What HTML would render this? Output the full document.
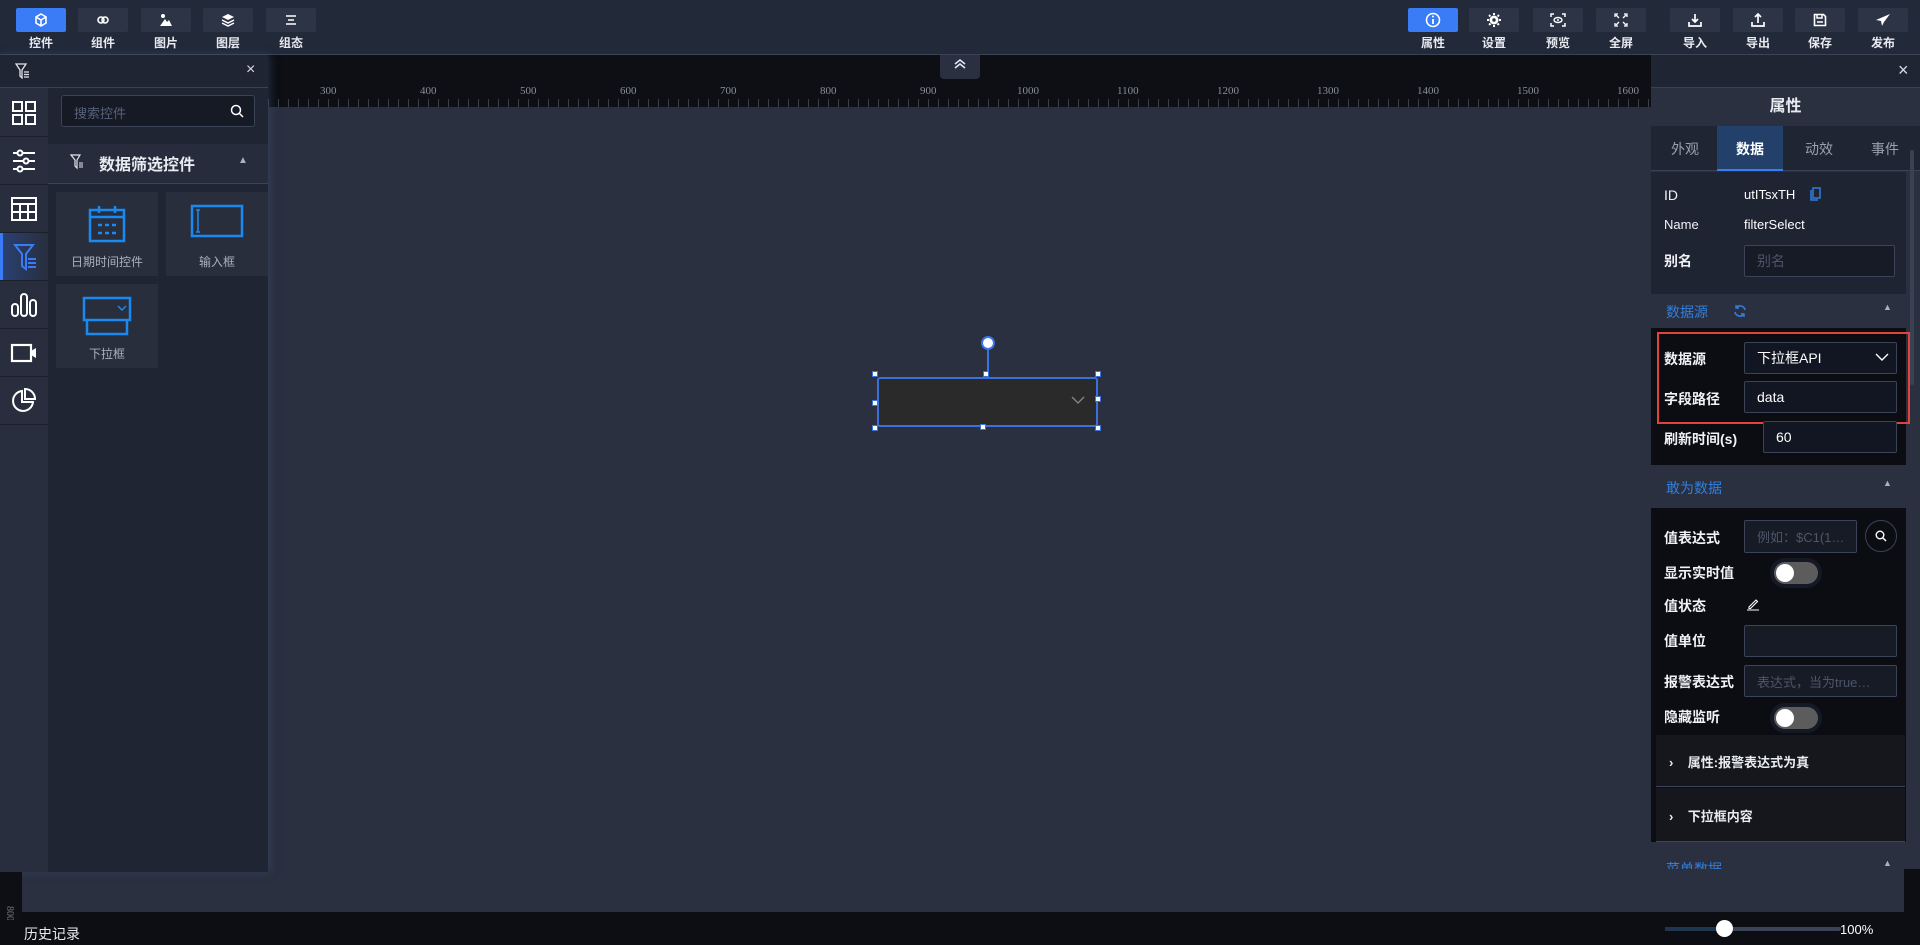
<!DOCTYPE html>
<html><head><meta charset="utf-8"><style>
*{margin:0;padding:0;box-sizing:border-box}
body{width:1920px;height:945px;overflow:hidden;background:#0c0e13;font-family:"Liberation Sans","Noto Sans CJK SC",sans-serif;color:#e6e8ee;position:relative}
.abs{position:absolute}
.top{left:0;top:0;width:1920px;height:55px;background:#222939;border-bottom:1px solid #3a4357}
.tb{position:absolute;top:8px;width:50px;height:24px;background:#2c3446;border-radius:2px;display:flex;align-items:center;justify-content:center}
.tb.on{background:#3a7bf6}
.tl{position:absolute;top:34px;width:50px;text-align:center;font-size:12px;color:#e8eaf0;font-weight:bold}
.canvas{left:22px;top:55px;width:1882px;height:857px;background:#2a3040}
.ruler{left:268px;top:55px;width:1383px;height:52px;background:#0d0f15}
.rl{position:absolute;top:30px;font-family:"Liberation Serif",serif;font-size:11px;color:#8a8f99}
.lp{left:0;top:55px;width:268px;height:817px;background:#202534;box-shadow:2px 0 8px rgba(60,80,110,.5)}
.ic{position:absolute;left:0;width:48px;height:47px;background:#282e3d;display:flex;align-items:center;justify-content:center}
.card{position:absolute;width:102px;height:84px;background:#282e3c;text-align:center;font-size:12px;color:#aab0bc}
.rp{left:1651px;top:55px;width:269px;height:814px;background:#2a3040;overflow:hidden}
.lab{position:absolute;left:13px;font-size:14px;color:#f0f2f6;font-weight:bold}
.inp{position:absolute;background:#171b26;border:1px solid #3a4358;border-radius:2px;font-size:14px;padding-left:12px;display:flex;align-items:center}
.sech{position:absolute;left:0;width:255px;font-size:14px;color:#2f7fe0}
.tog{position:absolute;width:44px;height:22px;border-radius:11px;background:#5c5c5c;box-shadow:0 0 0 4px #141925}
.tog:after{content:"";position:absolute;left:2px;top:2px;width:18px;height:18px;border-radius:9px;background:#fff}
.h{position:absolute;width:6px;height:6px;background:#fff;border:1.5px solid #3a74e0}
</style></head><body>
<div class="abs canvas"></div>
<div class="abs ruler">
<div class="abs" style="left:0;right:0;bottom:0;height:8px;background:repeating-linear-gradient(90deg,#3a3f4a 0 1px,transparent 1px 10px)"></div>
<div class="rl" style="left:52px">300</div><div class="rl" style="left:152px">400</div><div class="rl" style="left:252px">500</div><div class="rl" style="left:352px">600</div><div class="rl" style="left:452px">700</div><div class="rl" style="left:552px">800</div><div class="rl" style="left:652px">900</div><div class="rl" style="left:749px">1000</div><div class="rl" style="left:849px">1100</div><div class="rl" style="left:949px">1200</div><div class="rl" style="left:1049px">1300</div><div class="rl" style="left:1149px">1400</div><div class="rl" style="left:1249px">1500</div><div class="rl" style="left:1349px">1600</div>
</div>
<div class="abs" style="left:940px;top:55px;width:40px;height:24px;background:#2a3040;border-radius:0 0 4px 4px;color:#dfe6f5;text-align:center;font-size:12px;line-height:22px"><svg width="14" height="12" viewBox="0 0 14 12"><path d="M2 6l5-4 5 4M2 10l5-4 5 4" stroke="#dfe6f5" stroke-width="1.6" fill="none"/></svg></div>

<div class="abs top">
<div class="tb on" style="left:16px"><svg width="14" height="14" viewBox="0 0 14 14"><path d="M7 1l5 3v6l-5 3-5-3V4zM2 4l5 3 5-3M7 7v6" stroke="#fff" stroke-width="1.6" fill="none"/></svg></div><div class="tl" style="left:16px">控件</div>
<div class="tb" style="left:78px"><svg width="14" height="10" viewBox="0 0 14 10"><circle cx="5" cy="5" r="3" stroke="#fff" stroke-width="1.6" fill="none"/><circle cx="9" cy="5" r="3" stroke="#fff" stroke-width="1.6" fill="none"/></svg></div><div class="tl" style="left:78px">组件</div>
<div class="tb" style="left:141px"><svg width="14" height="14" viewBox="0 0 14 14"><circle cx="4" cy="3" r="2" fill="#fff"/><path d="M1 13l5-7 2 3 2-2 3 6z" fill="#fff"/></svg></div><div class="tl" style="left:141px">图片</div>
<div class="tb" style="left:203px"><svg width="14" height="14" viewBox="0 0 14 14"><path d="M7 1l6 3-6 3-6-3z" fill="#fff"/><path d="M1 7l6 3 6-3M1 10l6 3 6-3" stroke="#fff" stroke-width="1.5" fill="none"/></svg></div><div class="tl" style="left:203px">图层</div>
<div class="tb" style="left:266px"><svg width="12" height="10" viewBox="0 0 12 10"><path d="M1 1h10M3 5h6M1 9h10" stroke="#fff" stroke-width="1.6"/></svg></div><div class="tl" style="left:266px">组态</div>

<div class="tb on" style="left:1408px"><svg width="16" height="16" viewBox="0 0 16 16"><circle cx="8" cy="8" r="6.5" stroke="#fff" stroke-width="1.6" fill="none"/><path d="M8 7v5" stroke="#fff" stroke-width="1.8"/><circle cx="8" cy="4.5" r="1" fill="#fff"/></svg></div><div class="tl" style="left:1408px">属性</div>
<div class="tb" style="left:1469px"><svg width="14" height="14" viewBox="0 0 14 14"><circle cx="7" cy="7" r="4.5" fill="#fff"/><circle cx="7" cy="7" r="1.7" fill="#2c3446"/><path d="M7 0v14M0 7h14M2 2l10 10M12 2L2 12" stroke="#fff" stroke-width="2" stroke-dasharray="2 10"/></svg></div><div class="tl" style="left:1469px">设置</div>
<div class="tb" style="left:1533px"><svg width="16" height="14" viewBox="0 0 16 14"><path d="M1 4V1h3M12 1h3v3M15 10v3h-3M4 13H1v-3" stroke="#fff" stroke-width="1.5" fill="none"/><ellipse cx="8" cy="7" rx="4" ry="2.5" stroke="#fff" stroke-width="1.4" fill="none"/><circle cx="8" cy="7" r="1" fill="#fff"/></svg></div><div class="tl" style="left:1533px">预览</div>
<div class="tb" style="left:1596px"><svg width="14" height="14" viewBox="0 0 14 14"><path d="M1 4V1h3M10 1h3v3M13 10v3h-3M4 13H1v-3M2 2l3 3M12 2L9 5M12 12L9 9M2 12l3-3" stroke="#fff" stroke-width="1.3" fill="none"/></svg></div><div class="tl" style="left:1596px">全屏</div>
<div class="tb" style="left:1670px"><svg width="14" height="14" viewBox="0 0 14 14"><path d="M7 1v8M4 6l3 3 3-3M1 9v4h12V9" stroke="#fff" stroke-width="1.7" fill="none"/></svg></div><div class="tl" style="left:1670px">导入</div>
<div class="tb" style="left:1733px"><svg width="14" height="14" viewBox="0 0 14 14"><path d="M7 10V1M4 4l3-3 3 3M1 9v4h12V9" stroke="#fff" stroke-width="1.7" fill="none"/></svg></div><div class="tl" style="left:1733px">导出</div>
<div class="tb" style="left:1795px"><svg width="14" height="14" viewBox="0 0 14 14"><path d="M1.5 1.5h9l2 2v9h-11z" stroke="#fff" stroke-width="1.6" fill="none"/><path d="M4 2v3h5V2M4 9h6" stroke="#fff" stroke-width="1.5" fill="none"/></svg></div><div class="tl" style="left:1795px">保存</div>
<div class="tb" style="left:1858px"><svg width="16" height="14" viewBox="0 0 16 14"><path d="M15 1L1 7l5 1 1 5 2-4z" fill="#fff"/></svg></div><div class="tl" style="left:1858px">发布</div>
</div>

<div class="abs lp">
<div class="abs" style="left:0;top:0;width:268px;height:33px;border-bottom:1px solid #394255;background:#202534"></div>
<svg class="abs" style="left:15px;top:8px" width="16" height="16" viewBox="0 0 16 16"><path d="M1 1h10L7 7v8L5 13V7z" stroke="#e0e4ea" stroke-width="1.3" fill="none"/><path d="M9 9h5M9 11.5h5M9 14h5" stroke="#e0e4ea" stroke-width="1.2"/></svg>
<div class="abs" style="left:246px;top:6px;font-size:16px;color:#d8dce4">×</div>
<div class="abs" style="left:0;top:33px;width:48px;height:784px;background:#282e3d"></div>
<div class="ic" style="top:34px"><svg width="26" height="26" viewBox="0 0 26 26"><g stroke="#fff" stroke-width="2" fill="none"><rect x="2" y="2" width="9" height="9"/><rect x="15" y="2" width="9" height="9"/><rect x="2" y="15" width="9" height="9"/><rect x="15" y="15" width="9" height="9"/></g></svg></div>
<div class="ic" style="top:82px"><svg width="26" height="24" viewBox="0 0 26 24"><g stroke="#fff" stroke-width="2" fill="#282e3d"><path d="M2 4h22M2 12h22M2 20h22"/><circle cx="9" cy="4" r="2.5"/><circle cx="15" cy="12" r="2.5"/><circle cx="9" cy="20" r="2.5"/></g></svg></div>
<div class="ic" style="top:130px"><svg width="26" height="24" viewBox="0 0 26 24"><g stroke="#fff" stroke-width="2" fill="none"><rect x="1" y="1" width="24" height="22"/><path d="M1 7h24M1 15h24M9 7v16M17 7v16"/></g></svg></div>
<div class="ic" style="top:178px;background:linear-gradient(90deg,#2a4070,#282e3d);border-left:3px solid #3a7bf6"><svg width="26" height="28" viewBox="0 0 26 28"><path d="M2 2h18l-7 9v15l-4-3V11z" stroke="#3a7bf6" stroke-width="2" fill="none"/><path d="M15 16h8M15 20h8M15 24h8" stroke="#3a7bf6" stroke-width="2"/></svg></div>
<div class="ic" style="top:226px"><svg width="26" height="26" viewBox="0 0 26 26"><g stroke="#fff" stroke-width="2" fill="none"><rect x="1" y="12" width="6" height="12" rx="3"/><rect x="10" y="2" width="6" height="22" rx="3"/><rect x="19" y="8" width="6" height="16" rx="3"/></g></svg></div>
<div class="ic" style="top:274px"><svg width="28" height="22" viewBox="0 0 28 22"><rect x="2" y="3" width="19" height="16" stroke="#fff" stroke-width="2.2" fill="none"/><path d="M21 9l5-3v10l-5-3z" fill="#fff"/></svg></div>
<div class="ic" style="top:322px"><svg width="26" height="26" viewBox="0 0 26 26"><g stroke="#fff" stroke-width="2" fill="none"><path d="M11 3a10 10 0 1 0 11 11H11z"/><path d="M14 1v10h10A10 10 0 0 0 14 1z"/></g></svg></div>
<div class="abs" style="left:0;top:81px;width:48px;height:1px;background:#1b1f2b;box-shadow:0 48px #1b1f2b,0 96px #1b1f2b,0 144px #1b1f2b,0 192px #1b1f2b,0 240px #1b1f2b,0 288px #1b1f2b"></div>
<div class="abs" style="left:61px;top:40px;width:194px;height:32px;background:#161a25;border:1px solid #3a4357;border-radius:3px;font-size:13px;color:#566079;padding:7px 12px">搜索控件</div>
<svg class="abs" style="left:230px;top:49px" width="14" height="14" viewBox="0 0 14 14"><circle cx="6" cy="6" r="4.5" stroke="#fff" stroke-width="1.5" fill="none"/><path d="M9.5 9.5l3.5 3.5" stroke="#fff" stroke-width="1.5"/></svg>
<div class="abs" style="left:48px;top:89px;width:220px;height:40px;background:#262c3b;border-bottom:1px solid #3a4357"></div>
<svg class="abs" style="left:70px;top:99px" width="14" height="16" viewBox="0 0 14 16"><path d="M1 1h9L7 6v8L5 12V6z" stroke="#e0e4ea" stroke-width="1.2" fill="none"/><path d="M9 9h4M9 11h4M9 13h4" stroke="#e0e4ea" stroke-width="1"/></svg>
<div class="abs" style="left:99px;top:96px;font-size:16px;font-weight:bold;color:#e8ebf0">数据筛选控件</div>
<div class="abs" style="left:238px;top:100px;font-size:10px;color:#aab0bc">▲</div>
<div class="card" style="left:56px;top:137px"><svg style="margin-top:12px" width="40" height="40" viewBox="0 0 40 40"><g stroke="#1a8af0" stroke-width="2.5" fill="none"><rect x="3" y="6" width="34" height="31"/><path d="M3 13h34M12 2v7M28 2v7"/></g><path d="M11 21h4M18 21h4M25 21h4M11 29h4M18 29h4M25 29h4" stroke="#1a8af0" stroke-width="2.5"/></svg><div style="margin-top:6px">日期时间控件</div></div>
<div class="card" style="left:166px;top:137px"><svg style="margin-top:12px" width="54" height="34" viewBox="0 0 54 34"><rect x="2" y="2" width="50" height="30" stroke="#1a8af0" stroke-width="2.5" fill="none"/><path d="M8 6v22M6 6h4M6 28h4" stroke="#1a8af0" stroke-width="1.5"/></svg><div style="margin-top:12px">输入框</div></div>
<div class="card" style="left:56px;top:229px"><svg style="margin-top:12px" width="50" height="40" viewBox="0 0 50 40"><rect x="2" y="2" width="46" height="22" stroke="#1a8af0" stroke-width="2.5" fill="none"/><path d="M5 24v14h40V24" stroke="#1a8af0" stroke-width="2.5" fill="none"/><path d="M36 10l4 4 4-4" stroke="#1a8af0" stroke-width="1.5" fill="none"/></svg><div style="margin-top:6px">下拉框</div></div>
</div>

<div class="abs" style="left:987px;top:344px;width:2px;height:34px;background:#3a74e0"></div>
<div class="abs" style="left:981px;top:336px;width:14px;height:14px;border-radius:7px;background:#fff;border:2.5px solid #3a74e0"></div>
<div class="abs" style="left:877px;top:377px;width:221px;height:50px;background:#2a2a2b;border:2px solid #3a6fdc;border-radius:3px"></div>
<svg class="abs" style="left:1071px;top:396px" width="14" height="9" viewBox="0 0 14 9"><path d="M1 1l6 6 6-6" stroke="#888" stroke-width="1.3" fill="none"/></svg>
<div class="h" style="left:872px;top:371px"></div><div class="h" style="left:983px;top:371px"></div><div class="h" style="left:1095px;top:371px"></div>
<div class="h" style="left:872px;top:400px"></div><div class="h" style="left:1095px;top:396px"></div>
<div class="h" style="left:872px;top:425px"></div><div class="h" style="left:980px;top:424px"></div><div class="h" style="left:1095px;top:425px"></div>

<div class="abs rp">
<div class="abs" style="left:0;top:0;width:269px;height:33px;background:#202534;border-bottom:1px solid #394255"></div>
<div class="abs" style="left:247px;top:5px;font-size:18px;color:#d8dce4">×</div>
<div class="abs" style="left:0;top:33px;width:269px;height:38px;text-align:center;font-size:16px;font-weight:bold;line-height:38px;color:#e8ebf0">属性</div>
<div class="abs" style="left:0;top:71px;width:269px;height:45px;background:#202534;border-bottom:1px solid #394255"></div>
<div class="abs" style="left:66px;top:71px;width:66px;height:45px;background:#23406b;border-bottom:2px solid #3a7bf6"></div>
<div class="abs" style="left:0;top:84px;width:269px;font-size:14px;color:#9aa0ac"><span class="abs" style="left:20px">外观</span><span class="abs" style="left:85px;color:#fff;font-weight:bold">数据</span><span class="abs" style="left:154px">动效</span><span class="abs" style="left:220px">事件</span></div>
<div class="abs" style="left:0;top:117px;width:255px;height:122px;background:#1f2433"></div>
<div class="lab" style="top:132px;font-weight:normal">ID</div>
<div class="abs" style="left:93px;top:132px;font-size:13px;color:#fff">utITsxTH</div>
<svg class="abs" style="left:159px;top:132px" width="11" height="14" viewBox="0 0 11 14"><path d="M3 1h7v10H3z" stroke="#2f7fe0" stroke-width="1.5" fill="none"/><path d="M1 3v10h7" stroke="#2f7fe0" stroke-width="1.5" fill="none"/></svg>
<div class="lab" style="top:162px;font-weight:normal;font-size:13px">Name</div>
<div class="abs" style="left:93px;top:162px;font-size:13px;color:#fff">filterSelect</div>
<div class="lab" style="top:196px">别名</div>
<div class="inp" style="left:93px;top:190px;width:151px;height:32px;color:#4c556a">别名</div>
<div class="sech" style="top:239px;height:34px"><span class="abs" style="left:15px;top:8px">数据源</span><svg class="abs" style="left:82px;top:10px" width="14" height="14" viewBox="0 0 14 14"><path d="M12 6A5 5 0 0 0 3 4M2 8a5 5 0 0 0 9 2" stroke="#2f7fe0" stroke-width="1.6" fill="none"/><path d="M3 1v3h3M11 13v-3H8" stroke="#2f7fe0" stroke-width="1.4" fill="none"/></svg><span class="abs" style="left:232px;top:8px;font-size:9px;color:#aab0bc">▲</span></div>
<div class="abs" style="left:0;top:273px;width:255px;height:137px;background:#0b0d12"></div>
<div class="abs" style="left:6px;top:277px;width:253px;height:92px;border:2px solid #e0443a"></div>
<div class="lab" style="top:294px">数据源</div>
<div class="inp" style="left:93px;top:287px;width:153px;height:32px;color:#fff;background:#121622">下拉框API</div>
<svg class="abs" style="left:224px;top:298px" width="14" height="9" viewBox="0 0 14 9"><path d="M1 1l6 6 6-6" stroke="#fff" stroke-width="1.4" fill="none"/></svg>
<div class="lab" style="top:334px">字段路径</div>
<div class="inp" style="left:93px;top:326px;width:153px;height:32px;color:#fff;background:#121622">data</div>
<div class="lab" style="top:374px">刷新时间(s)</div>
<div class="inp" style="left:112px;top:366px;width:134px;height:32px;color:#fff;background:#121622">60</div>
<div class="sech" style="top:410px;height:43px"><span class="abs" style="left:15px;top:13px">敢为数据</span><span class="abs" style="left:232px;top:13px;font-size:9px;color:#aab0bc">▲</span></div>
<div class="abs" style="left:0;top:453px;width:255px;height:334px;background:#0b0d12"></div>
<div class="lab" style="top:473px">值表达式</div>
<div class="inp" style="left:93px;top:465px;width:113px;height:33px;color:#4c556a;font-size:13px">例如：$C1(1…</div>
<div class="abs" style="left:214px;top:465px;width:32px;height:32px;border:1px solid #3a4357;border-radius:16px"></div>
<svg class="abs" style="left:224px;top:475px" width="12" height="12" viewBox="0 0 12 12"><circle cx="5" cy="5" r="3.8" stroke="#fff" stroke-width="1.4" fill="none"/><path d="M8 8l3 3" stroke="#fff" stroke-width="1.5"/></svg>
<div class="lab" style="top:508px">显示实时值</div>
<div class="tog" style="left:123px;top:507px"></div>
<div class="lab" style="top:541px">值状态</div>
<svg class="abs" style="left:95px;top:542px" width="14" height="14" viewBox="0 0 14 14"><path d="M3 10l7-7 1.5 1.5-7 7H3zM1 13h12" stroke="#fff" stroke-width="1.1" fill="none"/></svg>
<div class="lab" style="top:576px">值单位</div>
<div class="inp" style="left:93px;top:570px;width:153px;height:32px"></div>
<div class="lab" style="top:617px">报警表达式</div>
<div class="inp" style="left:93px;top:610px;width:153px;height:32px;color:#4c556a;font-size:13px">表达式，当为true…</div>
<div class="lab" style="top:652px">隐藏监听</div>
<div class="tog" style="left:123px;top:652px"></div>
<div class="abs" style="left:5px;top:680px;width:249px;height:52px;background:#15171d;border-bottom:1px solid #3a4357"></div>
<div class="abs" style="left:5px;top:733px;width:249px;height:54px;background:#15171d;border-bottom:1px solid #3a4357"></div>
<div class="abs" style="left:18px;top:697px;font-size:13px;font-weight:bold;color:#e8ebf0">›&nbsp;&nbsp;&nbsp;&nbsp;属性:报警表达式为真</div>
<div class="abs" style="left:18px;top:751px;font-size:13px;font-weight:bold;color:#e8ebf0">›&nbsp;&nbsp;&nbsp;&nbsp;下拉框内容</div>
<div class="sech" style="top:789px;height:25px;overflow:hidden"><span class="abs" style="left:15px;top:15px">菜单数据</span><span class="abs" style="left:232px;top:14px;font-size:9px;color:#aab0bc">▲</span></div>
<div class="abs" style="left:259px;top:95px;width:4px;height:235px;background:#3a4152;border-radius:2px"></div>
</div>

<div class="abs" style="left:0;top:872px;width:22px;height:50px;background:#0d0f15"></div>
<div class="abs" style="left:2px;top:908px;font-size:10px;color:#777;font-family:'Liberation Serif',serif;transform:rotate(90deg)">800</div>
<div class="abs" style="left:0;top:920px;width:1920px;height:25px;background:#0c0e13"></div>
<div class="abs" style="left:24px;top:924px;font-size:14px;color:#e8ebf0">历史记录</div>
<div class="abs" style="left:1665px;top:927px;width:176px;height:4px;background:#3c4356;border-radius:2px"></div>
<div class="abs" style="left:1665px;top:927px;width:60px;height:4px;background:#1f3550"></div>
<div class="abs" style="left:1716px;top:920px;width:17px;height:17px;border-radius:9px;background:#fff"></div>
<div class="abs" style="left:1840px;top:922px;font-size:13px;color:#fff">100%</div>
</body></html>
